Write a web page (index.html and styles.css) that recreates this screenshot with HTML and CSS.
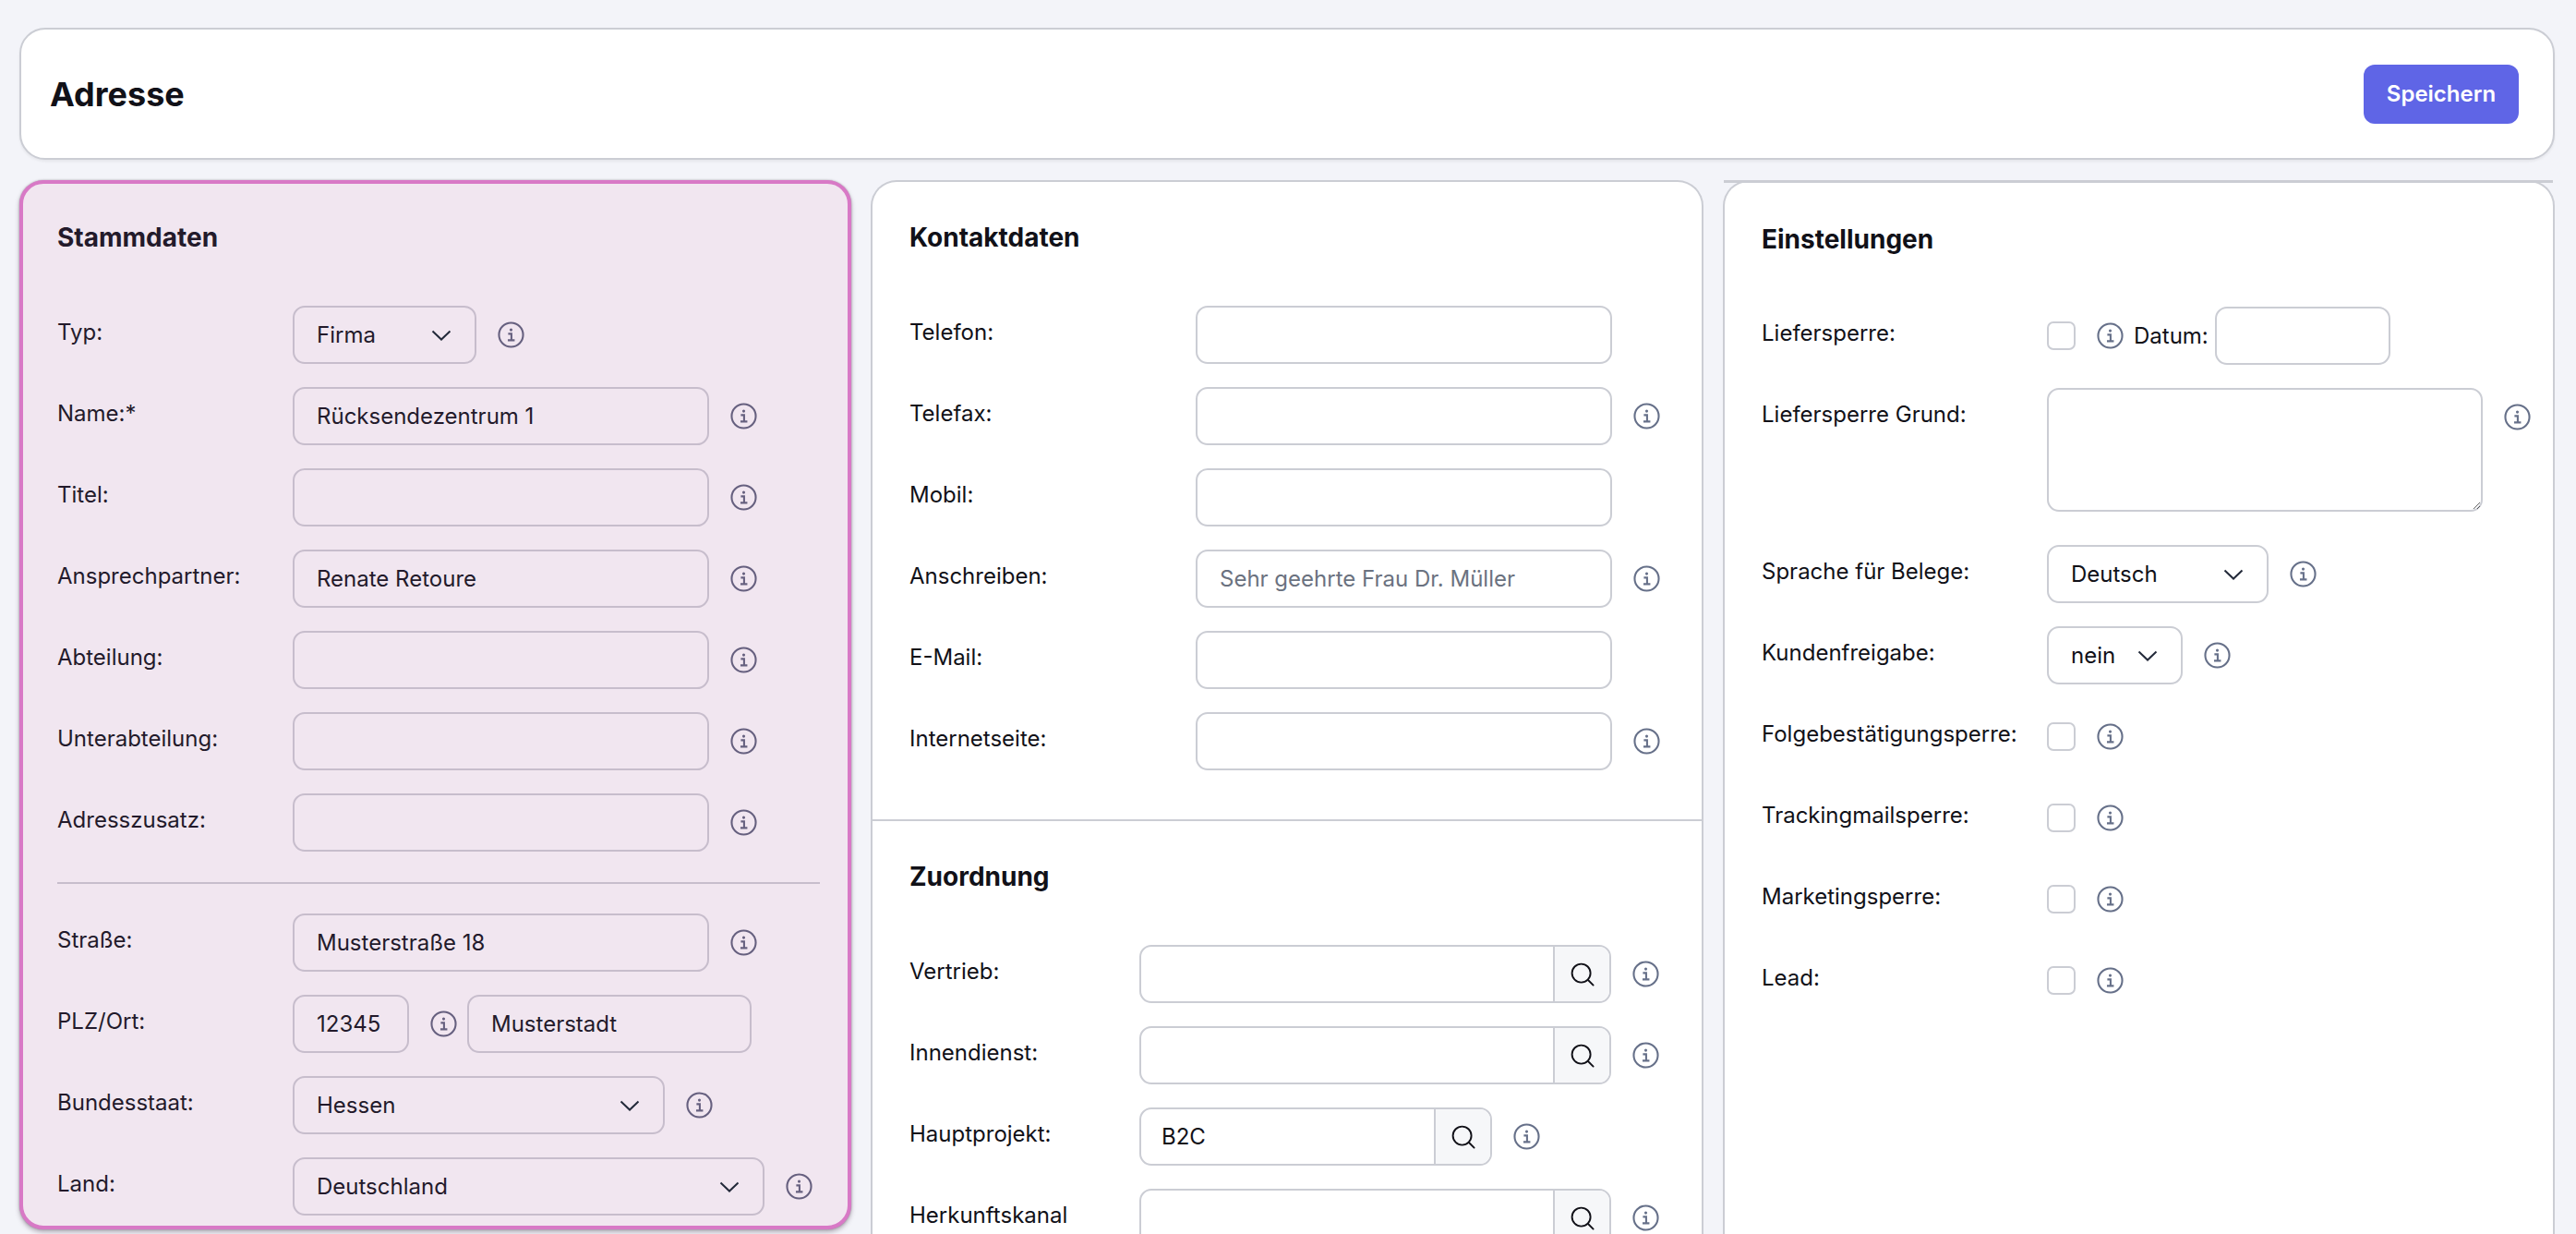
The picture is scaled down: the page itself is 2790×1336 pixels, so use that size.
FILE: index.html
```html
<!DOCTYPE html>
<html lang="de">
<head>
    <meta charset="UTF-8">
    <meta name="viewport" content="width=device-width, initial-scale=1.0">
    <title>Adresse</title>
    <link rel="stylesheet" href="styles.css">
</head>
<body>
    <svg class="icon-defs" width="0" height="0" aria-hidden="true">
        <symbol id="info" viewBox="0 0 28 28">
            <circle cx="14" cy="14" r="12.6" fill="none" stroke="currentColor" stroke-width="2"/>
            <circle cx="14" cy="8.8" r="1.5" fill="currentColor"/>
            <path d="M11 12.9H14.4V19.6M10.6 19.7H17.8" fill="none" stroke="currentColor" stroke-width="2"/>
        </symbol>
        <symbol id="search" viewBox="0 0 28 28">
            <circle cx="12.6" cy="12.6" r="10" fill="none" stroke="currentColor" stroke-width="1.9"/>
            <path d="M20 20L25.6 25.6" fill="none" stroke="currentColor" stroke-width="1.9" stroke-linecap="round"/>
        </symbol>
    </svg>

    <div class="page">
        <header class="top-bar">
            <h1>Adresse</h1>
            <button class="save-button" type="button">Speichern</button>
        </header>

        <div class="columns">
            <!-- Stammdaten -->
            <section class="card card-highlight">
                <div class="card-section">
                    <h2>Stammdaten</h2>
                    <div class="form-row label-md">
                        <label>Typ:</label>
                        <select class="field w-199"><option>Firma</option></select>
                        <svg class="info"><use href="#info"/></svg>
                    </div>
                    <div class="form-row label-md">
                        <label>Name:*</label>
                        <input class="field w-451" type="text" value="Rücksendezentrum 1">
                        <svg class="info"><use href="#info"/></svg>
                    </div>
                    <div class="form-row label-md">
                        <label>Titel:</label>
                        <input class="field w-451" type="text">
                        <svg class="info"><use href="#info"/></svg>
                    </div>
                    <div class="form-row label-md">
                        <label>Ansprechpartner:</label>
                        <input class="field w-451" type="text" value="Renate Retoure">
                        <svg class="info"><use href="#info"/></svg>
                    </div>
                    <div class="form-row label-md">
                        <label>Abteilung:</label>
                        <input class="field w-451" type="text">
                        <svg class="info"><use href="#info"/></svg>
                    </div>
                    <div class="form-row label-md">
                        <label>Unterabteilung:</label>
                        <input class="field w-451" type="text">
                        <svg class="info"><use href="#info"/></svg>
                    </div>
                    <div class="form-row label-md">
                        <label>Adresszusatz:</label>
                        <input class="field w-451" type="text">
                        <svg class="info"><use href="#info"/></svg>
                    </div>
                    <hr class="form-divider">
                    <div class="form-row label-md">
                        <label>Straße:</label>
                        <input class="field w-451" type="text" value="Musterstraße 18">
                        <svg class="info"><use href="#info"/></svg>
                    </div>
                    <div class="form-row label-md">
                        <label>PLZ/Ort:</label>
                        <input class="field w-126" type="text" value="12345">
                        <svg class="info"><use href="#info"/></svg>
                        <input class="field w-308 tight-left" type="text" value="Musterstadt">
                    </div>
                    <div class="form-row label-md">
                        <label>Bundesstaat:</label>
                        <select class="field w-403"><option>Hessen</option></select>
                        <svg class="info"><use href="#info"/></svg>
                    </div>
                    <div class="form-row label-md">
                        <label>Land:</label>
                        <select class="field w-511"><option>Deutschland</option></select>
                        <svg class="info"><use href="#info"/></svg>
                    </div>
                </div>
            </section>

            <!-- Kontaktdaten und Zuordnung -->
            <section class="card">
                <div class="card-section section-ruled">
                    <h2>Kontaktdaten</h2>
                    <div class="form-row label-lg">
                        <label>Telefon:</label>
                        <input class="field w-451" type="text">
                    </div>
                    <div class="form-row label-lg">
                        <label>Telefax:</label>
                        <input class="field w-451" type="text">
                        <svg class="info"><use href="#info"/></svg>
                    </div>
                    <div class="form-row label-lg">
                        <label>Mobil:</label>
                        <input class="field w-451" type="text">
                    </div>
                    <div class="form-row label-lg">
                        <label>Anschreiben:</label>
                        <input class="field w-451" type="text" placeholder="Sehr geehrte Frau Dr. Müller">
                        <svg class="info"><use href="#info"/></svg>
                    </div>
                    <div class="form-row label-lg">
                        <label>E-Mail:</label>
                        <input class="field w-451" type="text">
                    </div>
                    <div class="form-row label-lg">
                        <label>Internetseite:</label>
                        <input class="field w-451" type="text">
                        <svg class="info"><use href="#info"/></svg>
                    </div>
                </div>
                <div class="card-section">
                    <h2>Zuordnung</h2>
                    <div class="form-row label-sm">
                        <label>Vertrieb:</label>
                        <div class="lookup w-511">
                            <input type="text">
                            <button type="button"><svg class="search"><use href="#search"/></svg></button>
                        </div>
                        <svg class="info"><use href="#info"/></svg>
                    </div>
                    <div class="form-row label-sm">
                        <label>Innendienst:</label>
                        <div class="lookup w-511">
                            <input type="text">
                            <button type="button"><svg class="search"><use href="#search"/></svg></button>
                        </div>
                        <svg class="info"><use href="#info"/></svg>
                    </div>
                    <div class="form-row label-sm">
                        <label>Hauptprojekt:</label>
                        <div class="lookup w-382">
                            <input type="text" value="B2C">
                            <button type="button"><svg class="search"><use href="#search"/></svg></button>
                        </div>
                        <svg class="info"><use href="#info"/></svg>
                    </div>
                    <div class="form-row label-sm">
                        <label>Herkunftskanal</label>
                        <div class="lookup w-511">
                            <input type="text">
                            <button type="button"><svg class="search"><use href="#search"/></svg></button>
                        </div>
                        <svg class="info"><use href="#info"/></svg>
                    </div>
                </div>
            </section>

            <!-- Einstellungen -->
            <section class="card card-settings">
                <div class="card-section">
                    <h2>Einstellungen</h2>
                    <div class="form-row label-lg">
                        <label>Liefersperre:</label>
                        <input class="check" type="checkbox">
                        <svg class="info"><use href="#info"/></svg>
                        <span class="inline-label">Datum:</span>
                        <input class="field w-190" type="text">
                    </div>
                    <div class="form-row label-lg row-top">
                        <label>Liefersperre Grund:</label>
                        <textarea class="field w-472 notes"></textarea>
                        <svg class="info"><use href="#info"/></svg>
                    </div>
                    <div class="form-row label-lg">
                        <label>Sprache für Belege:</label>
                        <select class="field w-240"><option>Deutsch</option></select>
                        <svg class="info"><use href="#info"/></svg>
                    </div>
                    <div class="form-row label-lg">
                        <label>Kundenfreigabe:</label>
                        <select class="field w-147"><option>nein</option></select>
                        <svg class="info"><use href="#info"/></svg>
                    </div>
                    <div class="form-row label-lg">
                        <label>Folgebestätigungsperre:</label>
                        <input class="check" type="checkbox">
                        <svg class="info"><use href="#info"/></svg>
                    </div>
                    <div class="form-row label-lg">
                        <label>Trackingmailsperre:</label>
                        <input class="check" type="checkbox">
                        <svg class="info"><use href="#info"/></svg>
                    </div>
                    <div class="form-row label-lg">
                        <label>Marketingsperre:</label>
                        <input class="check" type="checkbox">
                        <svg class="info"><use href="#info"/></svg>
                    </div>
                    <div class="form-row label-lg">
                        <label>Lead:</label>
                        <input class="check" type="checkbox">
                        <svg class="info"><use href="#info"/></svg>
                    </div>
                </div>
            </section>
        </div>
    </div>
</body>
</html>
```

FILE: styles.css
```css
html, body {
    height: 100%;
    overflow: hidden;
}

body {
    margin: 0;
    font-family: Inter, "Liberation Sans", sans-serif;
    font-size: 24px;
    color: #111118;
    background-color: #f3f4f9;
}

.icon-defs {
    position: absolute;
}

.page {
    display: flex;
    flex-direction: column;
    gap: 22px;
    height: 100vh;
    box-sizing: border-box;
    padding: 30px 23px 0 21px;
}

/* Top bar */
.top-bar {
    display: flex;
    justify-content: space-between;
    align-items: center;
    flex: 0 0 143px;
    box-sizing: border-box;
    padding: 0 37px 0 31px;
    background-color: #ffffff;
    border: 2px solid #cbcdd4;
    border-radius: 28px;
    box-shadow: 0 2px 3px rgba(0, 0, 0, 0.06);
}

.top-bar h1 {
    margin: 0;
    font-size: 36px;
    font-weight: 700;
}

.save-button {
    width: 168px;
    height: 64px;
    padding: 0;
    font: inherit;
    font-weight: 600;
    color: #ffffff;
    background-color: #5f65e6;
    border: none;
    border-radius: 12px;
}

/* Columns */
.columns {
    display: grid;
    grid-template-columns: 901px 902px 901px;
    column-gap: 21px;
    flex: 1;
    min-height: 0;
}

.card {
    box-sizing: border-box;
    height: 1400px;
    background-color: #ffffff;
    border: 2px solid #cbcdd4;
    border-bottom: none;
    border-radius: 28px 28px 0 0;
}

.card-section {
    padding: 38px 30px 53px 40px;
}

.section-ruled {
    border-bottom: 2px solid #cbcdd4;
}

.card-section h2 {
    margin: 0 0 52px;
    font-size: 28px;
    line-height: 44px;
    font-weight: 700;
}

.card-highlight {
    align-self: start;
    height: 1136px;
    color: #231a2b;
    background-color: #f1e6f0;
    border: 4px solid #d879c6;
    border-radius: 26px;
    box-shadow: 0 0 2px rgba(60, 40, 60, 0.4), 0 3px 5px rgba(60, 40, 60, 0.35);
}

.card-highlight .card-section {
    padding: 36px 30px 0 37px;
}

.card-highlight .field {
    border-color: #c7bdcc;
}

.card-highlight .info {
    color: #66607f;
}

/* flat strip over the top edge of the settings card */
.card-settings {
    position: relative;
}

.card-settings::before {
    content: "";
    position: absolute;
    top: -2px;
    left: -1px;
    right: 0;
    height: 3px;
    background-color: #cbcdd4;
}

.card-settings .card-section {
    padding-top: 40px;
}

.card-settings .card-section h2 {
    margin-bottom: 51px;
}

/* Form rows */
.form-row {
    display: flex;
    align-items: center;
    gap: 23px;
    min-height: 63px;
    margin-bottom: 25px;
}

.form-row:last-child {
    margin-bottom: 0;
}

.form-row label {
    flex: none;
    align-self: flex-start;
    margin-right: -23px;
    line-height: 57px;
}

.label-md label {
    width: 255px;
}

.label-lg label {
    width: 310px;
}

.label-sm label {
    width: 249px;
}

.card-settings .label-lg label {
    width: 309px;
}

.row-top {
    align-items: flex-start;
    margin-bottom: 36px;
}

.row-top .info {
    margin-top: 17px;
}

.form-divider {
    margin: 33px 0 32px;
    border: none;
    border-top: 2px solid #c7bdcc;
}

.field {
    flex: none;
    box-sizing: border-box;
    height: 63px;
    padding: 0 24px;
    font: inherit;
    color: inherit;
    background-color: transparent;
    border: 2px solid #cbcdd4;
    border-radius: 13px;
    outline: none;
}

.field::placeholder {
    color: #6b7280;
    opacity: 1;
}

select.field {
    appearance: none;
    background-image: url("data:image/svg+xml,%3Csvg xmlns='http://www.w3.org/2000/svg' width='22' height='12' viewBox='0 0 22 12'%3E%3Cpath d='M1.5 1.5L11 10.5L20.5 1.5' fill='none' stroke='%23232a3a' stroke-width='2'/%3E%3C/svg%3E");
    background-repeat: no-repeat;
    background-position: right 25px center;
}

.notes {
    display: block;
    height: 134px;
    padding: 14px 24px;
    resize: both;
}

.tight-left {
    margin-left: -12px;
}

.w-126 { width: 126px; padding-right: 8px; }
.w-147 { width: 147px; }
.w-190 { width: 190px; }
.w-199 { width: 199px; }
.w-240 { width: 240px; }
.w-308 { width: 308px; }
.w-382 { width: 382px; }
.w-403 { width: 403px; }
.w-451 { width: 451px; }
.w-472 { width: 472px; }
.w-511 { width: 511px; }

.info {
    flex: none;
    width: 29px;
    height: 29px;
    color: #667089;
}

.check {
    flex: none;
    appearance: none;
    box-sizing: border-box;
    width: 31px;
    height: 31px;
    margin: 0;
    background-color: #ffffff;
    border: 2px solid #cbcdd4;
    border-radius: 7px;
}

.inline-label {
    margin-left: -12px;
    margin-right: -16px;
}

/* Input with search button */
.lookup {
    display: flex;
    flex: none;
    box-sizing: border-box;
    height: 63px;
    background-color: #ffffff;
    border: 2px solid #cbcdd4;
    border-radius: 13px;
    overflow: hidden;
}

.lookup input {
    flex: 1;
    min-width: 0;
    padding: 0 22px;
    font: inherit;
    color: inherit;
    background: transparent;
    border: none;
    outline: none;
}

.lookup button {
    display: flex;
    flex: none;
    align-items: center;
    justify-content: center;
    box-sizing: border-box;
    width: 61px;
    padding: 0;
    color: #111118;
    background-color: #f6f7f9;
    border: none;
    border-left: 2px solid #cbcdd4;
}

.search {
    width: 28px;
    height: 28px;
}
```
